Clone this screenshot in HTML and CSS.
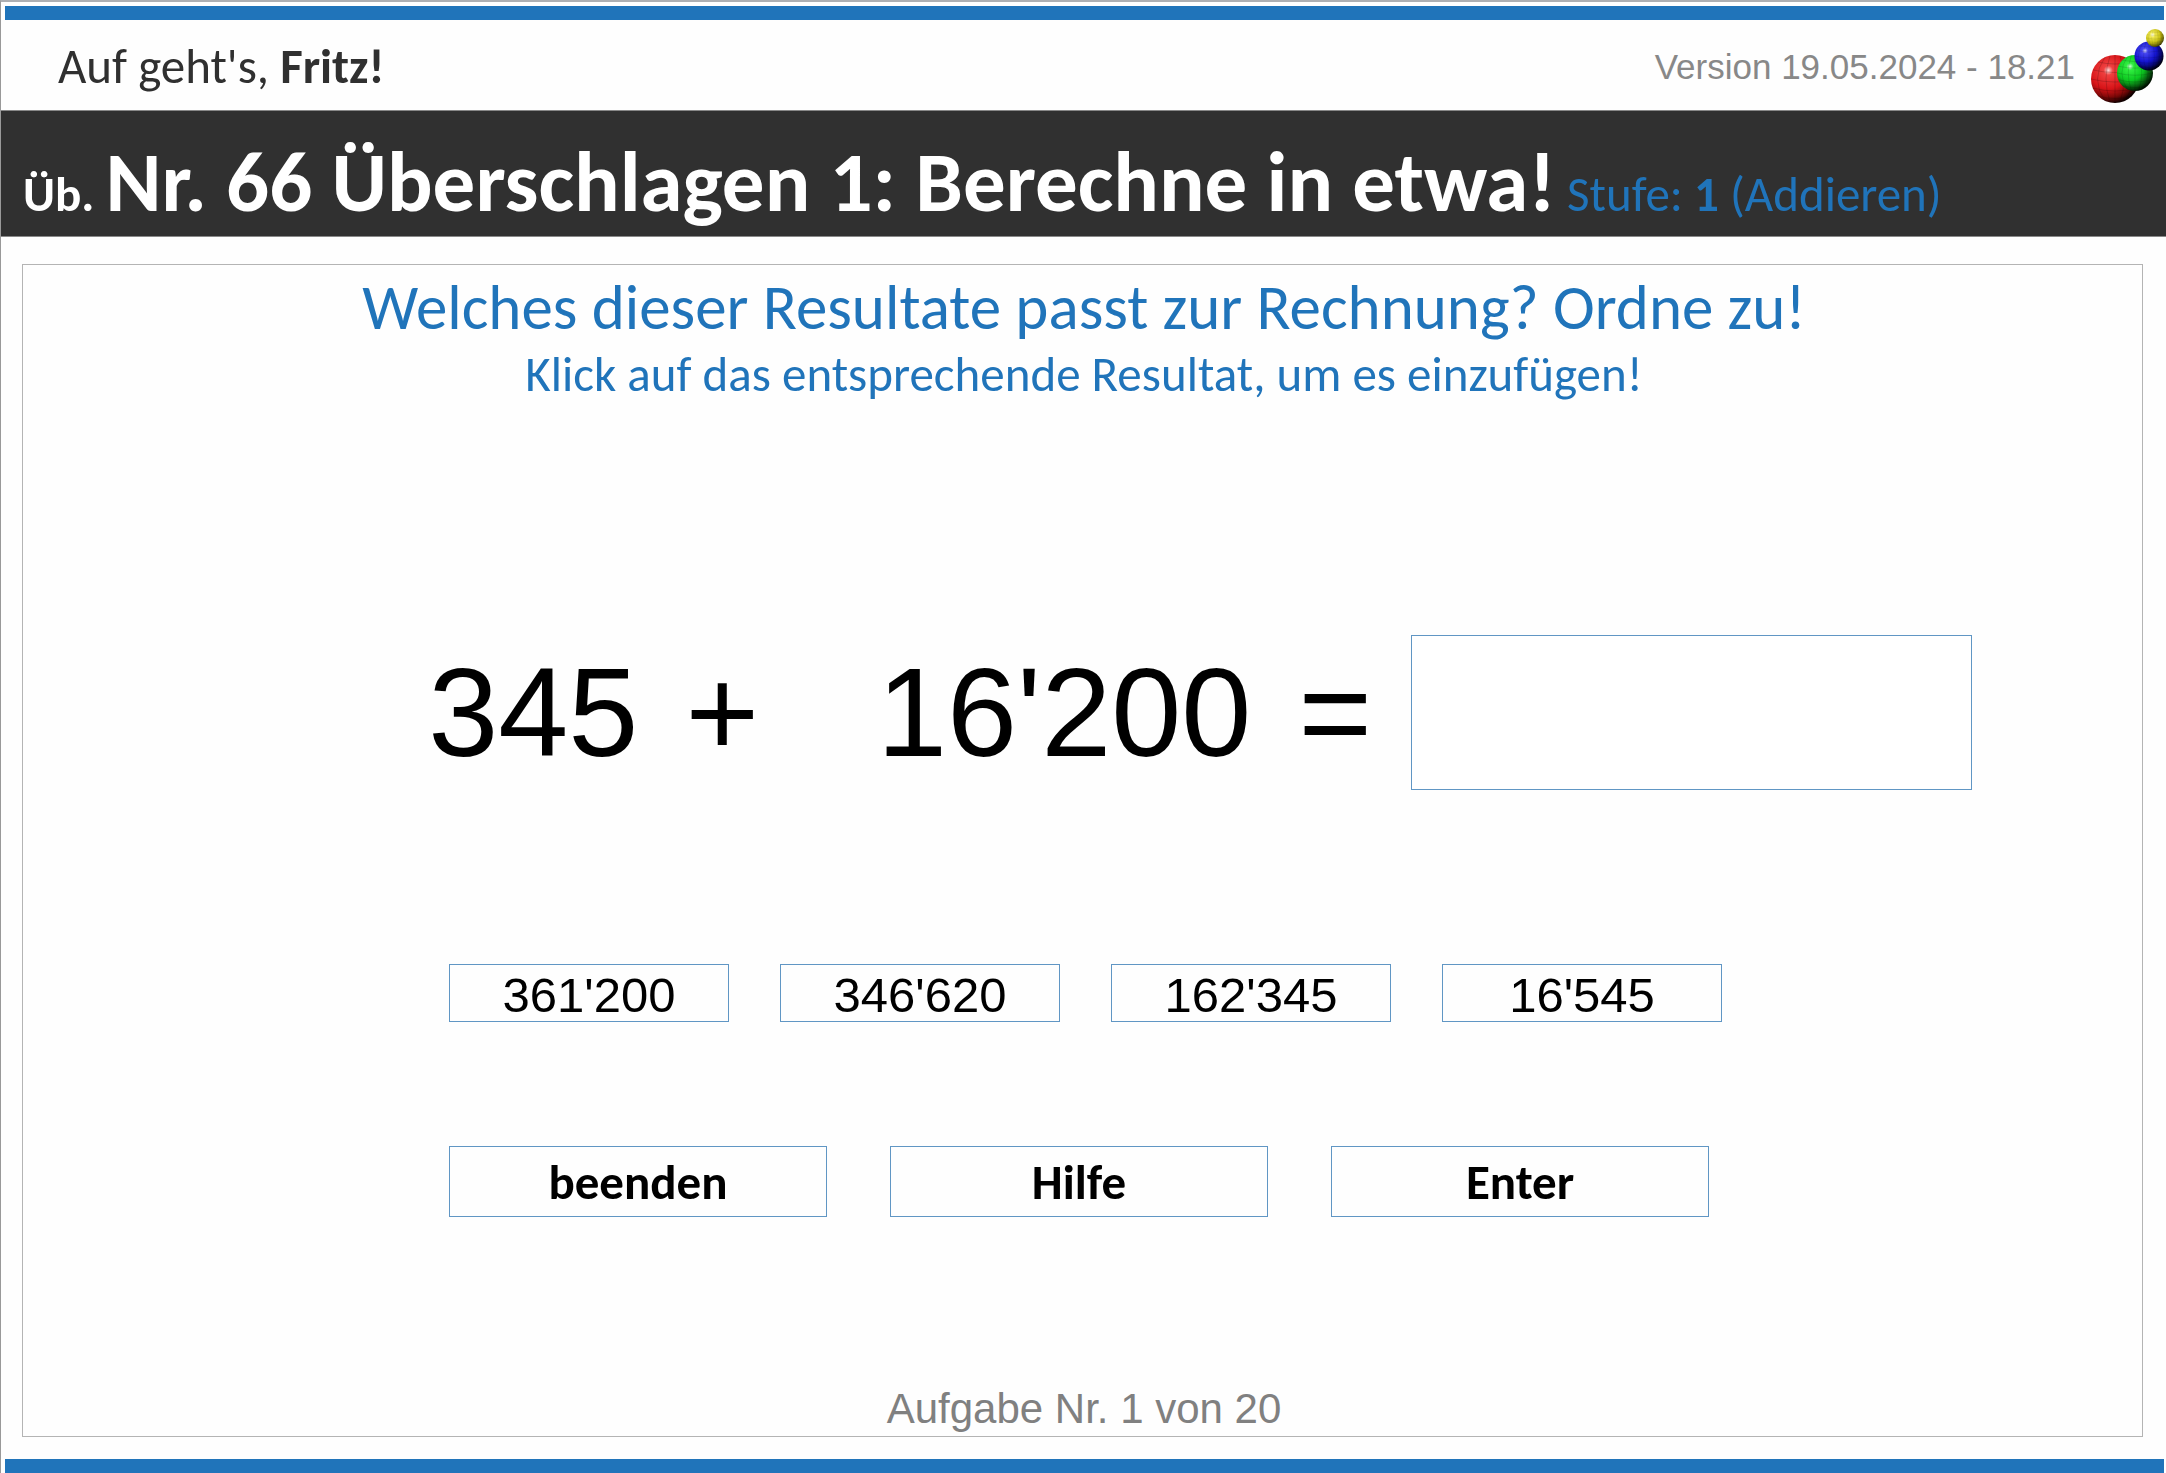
FILE: index.html
```
<!DOCTYPE html>
<html lang="de">
<head>
    <meta charset="UTF-8">
    <title>Überschlagen 1</title>
    <link rel="stylesheet" href="styles.css">
</head>
<body>
    <div class="bar"></div>

    <header>
        <div class="greeting">Auf geht's, <b>Fritz!</b></div>
        <div class="version">Version 19.05.2024 - 18.21</div>
        <svg class="logo" viewBox="0 0 74 76" aria-hidden="true">
            <defs>
                <radialGradient id="red" cx="36%" cy="32%" r="70%">
                    <stop offset="0" stop-color="#ffd8d8"/>
                    <stop offset="0.14" stop-color="#f04040"/>
                    <stop offset="0.55" stop-color="#d81418"/>
                    <stop offset="0.8" stop-color="#7c0808"/>
                    <stop offset="1" stop-color="#100000"/>
                </radialGradient>
                <radialGradient id="green" cx="36%" cy="32%" r="70%">
                    <stop offset="0" stop-color="#d0ffd8"/>
                    <stop offset="0.14" stop-color="#30ee40"/>
                    <stop offset="0.55" stop-color="#0cc820"/>
                    <stop offset="0.8" stop-color="#086010"/>
                    <stop offset="1" stop-color="#001000"/>
                </radialGradient>
                <radialGradient id="blue" cx="36%" cy="32%" r="70%">
                    <stop offset="0" stop-color="#d0d0ff"/>
                    <stop offset="0.14" stop-color="#4444f0"/>
                    <stop offset="0.55" stop-color="#1414d0"/>
                    <stop offset="0.8" stop-color="#080870"/>
                    <stop offset="1" stop-color="#000010"/>
                </radialGradient>
                <radialGradient id="yellow" cx="36%" cy="32%" r="75%">
                    <stop offset="0" stop-color="#ffffe0"/>
                    <stop offset="0.2" stop-color="#f0e850"/>
                    <stop offset="0.55" stop-color="#ccc418"/>
                    <stop offset="0.85" stop-color="#686408"/>
                    <stop offset="1" stop-color="#202000"/>
                </radialGradient>
                <!-- mesh lines of a sphere with radius 24 -->
                <g id="mesh" fill="none" stroke="#000" stroke-opacity="0.22" stroke-width="0.8">
                    <path d="M-22 -9Q0 -4 22 -9M-24 0Q0 6 24 0M-22 9Q0 15 22 9M-17 -17Q0 -13 17 -17M-17 17Q0 22 17 17"/>
                    <path d="M0 -24V24M-5 -23Q-13 0 -5 23M5 -23Q13 0 5 23M-10 -22Q-25 0 -10 22M10 -22Q25 0 10 22"/>
                </g>
            </defs>
            <circle cx="24" cy="50" r="24" fill="url(#red)"/>
            <use href="#mesh" transform="translate(24 50)"/>
            <circle cx="44" cy="44" r="18" fill="url(#green)"/>
            <use href="#mesh" transform="translate(44 44) scale(0.75)"/>
            <circle cx="58" cy="27" r="14.5" fill="url(#blue)"/>
            <use href="#mesh" transform="translate(58 27) scale(0.6)"/>
            <circle cx="64" cy="9" r="9" fill="url(#yellow)"/>
            <use href="#mesh" transform="translate(64 9) scale(0.37)"/>
        </svg>
    </header>

    <h1><span class="small">Üb. </span>Nr. 66 Überschlagen 1: Berechne in etwa!<span class="level"> Stufe: <b>1</b> (Addieren)</span></h1>

    <main>
        <h2>Welches dieser Resultate passt zur Rechnung? Ordne zu!</h2>
        <p class="hint">Klick auf das entsprechende Resultat, um es einzufügen!</p>

        <div class="task">
            <span>345</span>
            <span class="plus">+</span>
            <span class="second">16'200</span>
            <label class="equals" for="result">=</label>
            <input id="result" type="text" readonly>
        </div>

        <div class="row answers">
            <button type="button">361'200</button>
            <button type="button">346'620</button>
            <button type="button">162'345</button>
            <button type="button">16'545</button>
        </div>

        <div class="row actions">
            <button type="button" id="quit">beenden</button>
            <button type="button" id="help">Hilfe</button>
            <button type="button" id="enter">Enter</button>
        </div>

        <p class="progress">Aufgabe Nr. 1 von 20</p>
    </main>

    <div class="bar"></div>

    <script>
        const result = document.getElementById('result');
        document.querySelectorAll('.answers button').forEach(button => {
            button.addEventListener('click', () => {
                result.value = button.textContent;
            });
        });
    </script>
</body>
</html>
```
FILE: styles.css
```
* {
    box-sizing: border-box;
}
body {
    display: flex;
    flex-direction: column;
    min-height: 100vh;
    margin: 0;
    padding-top: 4px;
    background: #fefefe;
    border-top: 2px solid #adafb3;
    border-left: 1px solid #999;
    font-family: Calibri, Carlito, Lato, sans-serif;
    font-size: 49px;
    color: #303030;
}
h1, h2, p {
    margin: 0;
}
.bar {
    height: 14px;
    margin: 0 2px 0 4px;
    background: #2074ba;
    flex-shrink: 0;
}

header {
    display: flex;
    align-items: center;
    height: 90px;
    padding: 0 1px 0 57px;
}
.greeting {
    flex: 1;
    padding-top: 2px;
}
.version {
    font-family: "Liberation Sans", Arial, sans-serif;
    font-size: 35px;
    padding-top: 4px;
    color: #888;
}
.logo {
    width: 74px;
    height: 76px;
    margin: 4px 0 0 16px;
}

h1 {
    padding: 18px 0 0 22px;
    line-height: 107px;
    font-size: 85px;
    color: #fff;
    background: #303030;
    border-top: 1px solid #888;
    border-bottom: 1px solid #888;
}
.small, .level {
    font-size: 49px;
    line-height: 1;
}
.level {
    font-weight: normal;
    color: #2074ba;
}

main {
    flex: 1;
    display: flex;
    flex-direction: column;
    margin: 27px 23px 22px 21px;
    padding: 11px 0 3px 3px;
    border: 1px solid #b4b4b4;
    text-align: center;
}
h2 {
    font-size: 63px;
    font-weight: normal;
    line-height: 64px;
    color: #2074ba;
}
.hint {
    margin-top: 8px;
    line-height: 52px;
    color: #2074ba;
}

.task {
    display: flex;
    justify-content: flex-end;
    align-items: center;
    height: 155px;
    margin-top: 235px;
    padding-right: 170px;
    font-family: "Liberation Sans", Arial, sans-serif;
    font-size: 126px;
    color: #000;
}
.plus {
    margin-left: 47px;
}
.second {
    margin-left: 118px;
}
.equals {
    margin: 0 39px 0 47px;
}
#result {
    width: 561px;
    height: 155px;
    padding: 0 20px;
    font: inherit;
    text-align: center;
    background: #fff;
    border: 1px solid #6096c4;
    outline: none;
}

.row {
    display: flex;
    width: 1278px;
    margin: 0 auto;
    padding-left: 4px;
}
.row button {
    padding: 0;
    color: #000;
    background: #fefefe;
    border: 1px solid #6096c4;
    cursor: pointer;
}
.row button:hover {
    background: #e8f1f9;
}
.answers {
    gap: 51px;
    margin-top: 174px;
}
.answers button {
    width: 280px;
    height: 58px;
    padding-top: 4px;
    font-family: "Liberation Sans", Arial, sans-serif;
    font-size: 49px;
    line-height: 52px;
}
.actions {
    gap: 63px;
    margin-top: 124px;
}
.actions button {
    width: 378px;
    height: 71px;
    font-family: inherit;
    font-size: 49px;
    font-weight: bold;
}

.progress {
    margin-top: auto;
    font-family: "Liberation Sans", Arial, sans-serif;
    font-size: 42px;
    line-height: 48px;
    color: #808080;
}
```
